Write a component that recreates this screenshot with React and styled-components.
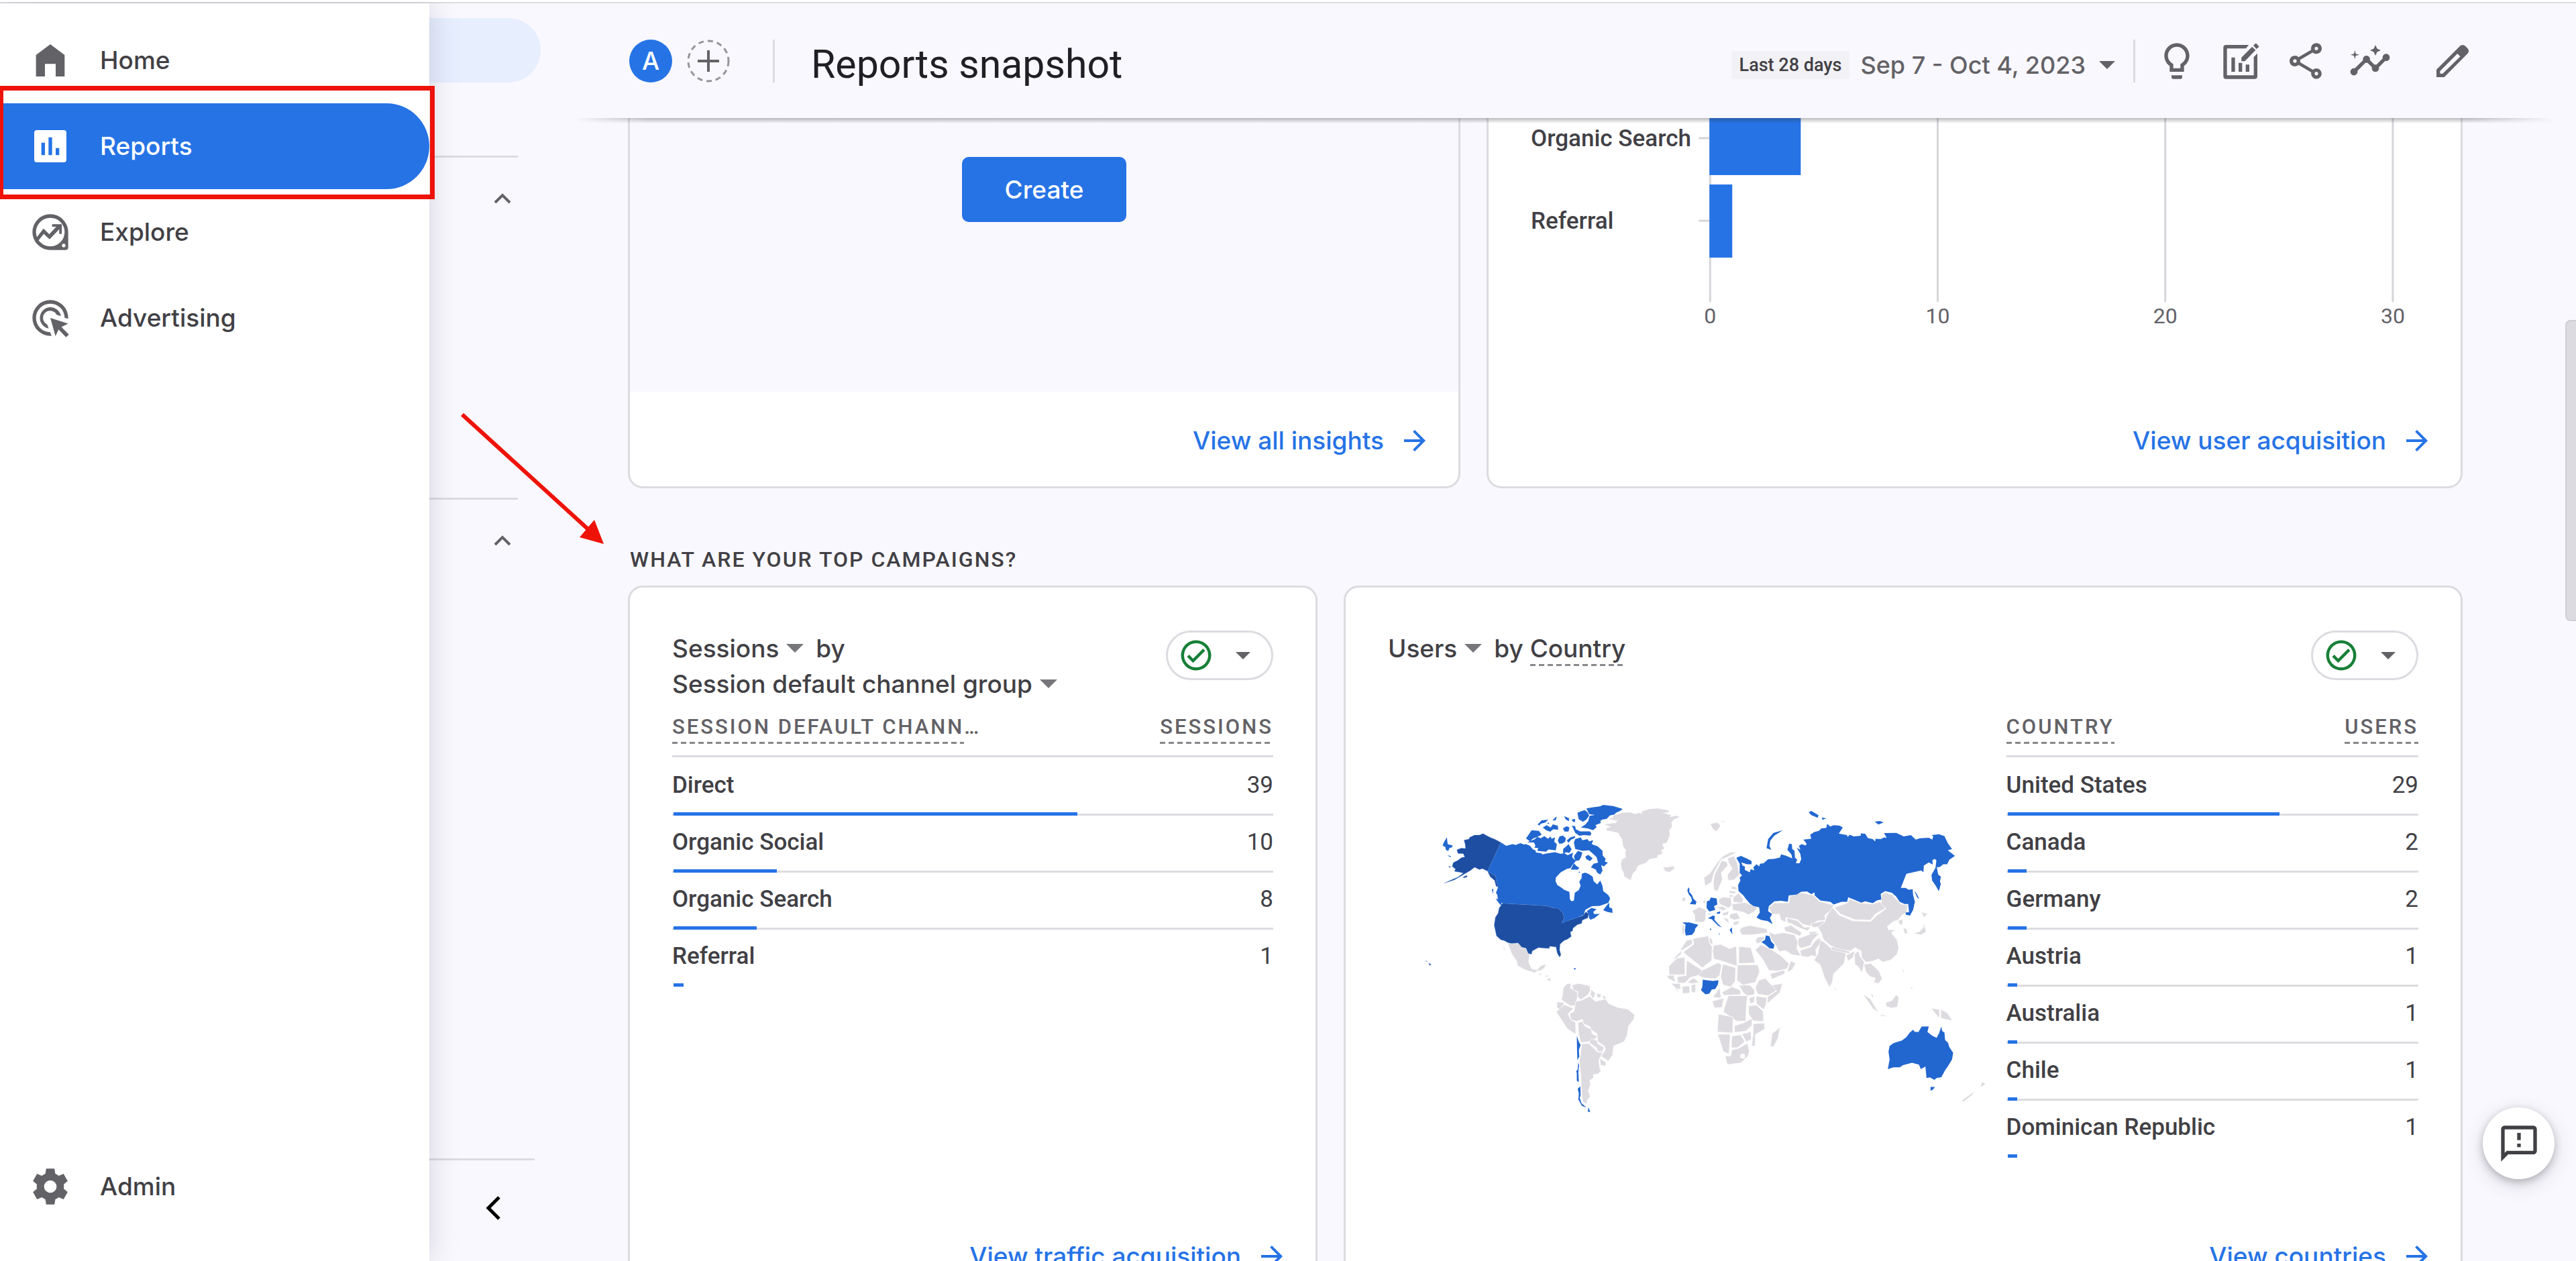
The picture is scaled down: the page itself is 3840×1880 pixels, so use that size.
import React from 'react';
import styled, { createGlobalStyle, css } from 'styled-components';

const c = {
  page: '#f9f8fe',
  white: '#ffffff',
  line: '#dcdbe0',
  ink: '#202024',
  text: '#414045',
  soft: '#636267',
  blue: '#2673e6',
  red: '#ee1308',
};
const display = "'Inter', 'Roboto', sans-serif";
const body = "'Roboto', 'Liberation Sans', sans-serif";

const GlobalStyle = createGlobalStyle`
  * { box-sizing: border-box; }
  body { margin: 0; background: ${c.page}; color: ${c.text}; font-family: ${body}; }
  button { border: 0; margin: 0; padding: 0; background: none; color: inherit; font: inherit; cursor: pointer; }
  a { color: inherit; text-decoration: none; }
  h1, h2, h3 { margin: 0; font-weight: 500; }
  svg { display: block; flex: none; }
`;

const Page = styled.div`
  position: relative;
  display: flex;
  height: 100vh;
  overflow: hidden;
  border-top: 3px solid ${c.white};
`;

/* ---------- icons ---------- */

const Glyph = ({ size = 64, children, ...rest }) => (
  <svg width={size} height={size} viewBox="0 0 24 24" fill="currentColor" aria-hidden="true" {...rest}>
    {children}
  </svg>
);
const HomeIcon = () => <Glyph><path d="M12 3 4 9v12h5v-7h6v7h5V9z" /></Glyph>;
const ReportsIcon = () => (
  <Glyph><path fillRule="evenodd" d="M4.500 3h15A1.500 1.500 0 0 1 21 4.500v15a1.500 1.500 0 0 1-1.500 1.500h-15A1.500 1.500 0 0 1 3 19.500v-15A1.500 1.500 0 0 1 4.500 3zM7 10v7h2v-7zm4-3v10h2V7zm4 6v4h2v-4z" /></Glyph>
);
const ExploreIcon = () => (
  <Glyph>
    <path fillRule="evenodd" d="M12 2a10 10 0 0 1 10 10v8.500a1.500 1.500 0 0 1-1.500 1.500H12A10 10 0 0 1 12 2zm0 2a8 8 0 1 0 0 16 8 8 0 0 0 0-16zm7.500 14.500a1 1 0 1 0 0 2 1 1 0 0 0 0-2z" />
    <path d="M4 15.500 8.200 10l3.200 3.200L15.300 9H13V7.600h5.400V13H17v-2.600L11.600 16 8.300 13l-3.100 4z" />
  </Glyph>
);
const AdvertisingIcon = () => (
  <Glyph>
    <path d="M12 2a10 10 0 0 1 10 10.500l-2-.6A8 8 0 1 0 11.900 20l.8 2H12A10 10 0 0 1 12 2z" />
    <path d="M12 6a6 6 0 0 1 5.900 5l-2.400-.8A4 4 0 1 0 10.200 15.600l.9 2.300A6 6 0 0 1 12 6z" />
    <path d="m12 12 10 3.200-3.800 1.900 4.200 4.200-1.600 1.500-4.200-4.300-1.700 3.700z" />
  </Glyph>
);
const GearIcon = () => (
  <Glyph><path fillRule="evenodd" d="m9.700 2-.5 2.900a7.500 7.500 0 0 0-1.900 1.100L4.600 4.900 2.300 8.900l2.200 1.900a7.500 7.500 0 0 0 0 2.400l-2.200 1.900 2.300 4 2.700-1.100a7.500 7.500 0 0 0 1.900 1.100l.5 2.900h4.600l.5-2.900a7.500 7.500 0 0 0 1.900-1.100l2.700 1.100 2.300-4-2.200-1.900a7.500 7.500 0 0 0 0-2.400l2.200-1.900-2.300-4L16.700 6a7.500 7.500 0 0 0-1.900-1.100L14.300 2zM12 8.500a3.500 3.500 0 1 1 0 7 3.500 3.500 0 0 1 0-7z" /></Glyph>
);
const BulbIcon = () => (
  <Glyph><path d="M9 20h6v1c0 .55-.45 1-1 1h-4c-.55 0-1-.45-1-1v-1zm3-18C8.140 2 5 5.140 5 9c0 2.380 1.190 4.470 3 5.740V18h8v-3.260c1.810-1.270 3-3.360 3-5.740 0-3.860-3.140-7-7-7zm2.850 11.100-.85.6V16h-4v-2.300l-.85-.6C7.800 12.160 7 10.630 7 9c0-2.760 2.240-5 5-5s5 2.240 5 5c0 1.630-.8 3.160-2.150 4.100z" /></Glyph>
);
const ChartEditIcon = () => (
  <Glyph>
    <path d="M16.200 3 14.600 5H4v15h15V9.750l2-2V20.500a1.500 1.500 0 0 1-1.500 1.500h-16A1.500 1.500 0 0 1 2 20.500v-16A1.500 1.500 0 0 1 3.500 3z" />
    <path d="M6.500 10h2v8h-2zM10.500 13h2v5h-2zM14.500 14h2v4h-2z" />
    <path d="M12.100 12.100v-2.100l6-6 1.900 1.900-6 6.200zM18.750 3.400 20.200 2 22 3.900l-1.450 1.350z" />
  </Glyph>
);
const ShareIcon = () => (
  <Glyph><path d="M18 16.080c-.76 0-1.440.3-1.960.77L8.910 12.700c.05-.23.09-.46.09-.7s-.04-.47-.09-.7l7.050-4.110c.54.5 1.250.81 2.040.81 1.660 0 3-1.340 3-3s-1.340-3-3-3-3 1.340-3 3c0 .24.04.47.09.7L8.040 9.810C7.500 9.310 6.790 9 6 9c-1.660 0-3 1.340-3 3s1.340 3 3 3c.79 0 1.500-.31 2.040-.81l7.120 4.160c-.05.21-.08.43-.08.65 0 1.610 1.310 2.920 2.920 2.920s2.920-1.310 2.920-2.920-1.310-2.920-2.920-2.920zM18 4c.55 0 1 .45 1 1s-.45 1-1 1-1-.45-1-1 .45-1 1-1zM6 13c-.55 0-1-.45-1-1s.45-1 1-1 1 .45 1 1-.45 1-1 1zm12 7.020c-.55 0-1-.45-1-1s.45-1 1-1 1 .45 1 1-.45 1-1 1z" /></Glyph>
);
const InsightsIcon = () => (
  <Glyph><path d="M21 8c-1.450 0-2.260 1.440-1.930 2.510l-3.550 3.560c-.3-.09-.74-.09-1.040 0l-2.550-2.550C12.270 10.450 11.460 9 10 9c-1.450 0-2.270 1.440-1.930 2.520l-4.560 4.550C2.440 15.740 1 16.550 1 18c0 1.100.9 2 2 2 1.450 0 2.260-1.440 1.930-2.510l4.550-4.560c.3.09.74.09 1.040 0l2.550 2.550C12.730 16.550 13.540 18 15 18c1.450 0 2.270-1.440 1.930-2.520l3.560-3.550C21.560 12.260 23 11.450 23 10c0-1.100-.9-2-2-2zM15 9l.94-2.070L18 6l-2.060-.93L15 3l-.92 2.070L12 6l2.080.93zM3.500 11 4 9l2-.5L4 8l-.5-2L3 8l-2 .5L3 9z" /></Glyph>
);
const PencilIcon = () => (
  <Glyph><path fillRule="evenodd" d="M3 21v-4.250L16.200 3.600a2 2 0 0 1 2.850 0l1.400 1.400a2 2 0 0 1 0 2.800L7.350 21zM5 19h1.500l9.800-9.500-1.600-1.600L5 17.600z" /></Glyph>
);
const FeedbackIcon = () => (
  <Glyph><path d="M20 2H4c-1.100 0-1.990.9-1.990 2L2 22l4-4h14c1.100 0 2-.9 2-2V4c0-1.100-.9-2-2-2zm0 14H5.170L4 17.170V4h16v12zM11 12h2v2h-2zm0-6h2v4h-2z" /></Glyph>
);
const ArrowIcon = () => (
  <Glyph size={48}><path d="m12 4-1.410 1.410L16.170 11H4v2h12.170l-5.580 5.590L12 20l8-8z" /></Glyph>
);
const CheckIcon = () => (
  <Glyph size={54} color="#188038"><path d="M12 2a10 10 0 1 0 0 20 10 10 0 0 0 0-20zm0 18a8 8 0 1 1 0-16 8 8 0 0 1 0 16zm4.590-12.420L10 14.170l-2.590-2.580L6 13l4 4 8-8z" /></Glyph>
);
const Caret = ({ width = 26 }) => (
  <svg width={width} height={width / 2} viewBox="0 0 2 1" fill="currentColor" aria-hidden="true"><path d="M0 0h2L1 1z" /></svg>
);
const ChevronUp = () => (
  <svg width="26" height="16" viewBox="0 0 26 16" fill="none" stroke="currentColor" strokeWidth="4" aria-hidden="true"><path d="M2 14 13 3l11 11" /></svg>
);

/* ---------- report navigation (under the drawer) ---------- */

const ReportNav = styled.aside`
  display: flex;
  flex-direction: column;
  flex: none;
  width: 806px;
  border-top: 2px solid ${c.line};
`;
const SelectedReport = styled.a`
  height: 96px;
  margin-top: 22px;
  border-radius: 0 48px 48px 0;
  background: #e7eefe;
`;
const NavGroup = styled.section`
  display: flex;
  justify-content: flex-end;
  align-items: flex-start;
  width: 772px;
  height: ${p => p.$height}px;
  margin-top: ${p => p.$first ? 109 : 0}px;
  border-top: 3px solid ${c.line};
  padding: 53px 10px 0 0;
  color: ${c.soft};
`;
const NavFooter = styled.div`
  display: flex;
  justify-content: flex-end;
  width: 797px;
  margin-top: auto;
  border-top: 3px solid ${c.line};
  padding: 53px 50px 61px 0;
  color: #000;
`;

/* ---------- main drawer ---------- */

const Drawer = styled.nav`
  position: absolute;
  z-index: 3;
  top: 2px;
  bottom: 0;
  left: 0;
  display: flex;
  flex-direction: column;
  width: 640px;
  padding: 21px 0 47px;
  background: ${c.white};
  box-shadow: 0 0 42px rgba(60, 58, 80, 0.2);
`;
const DrawerLink = styled.a`
  display: flex;
  align-items: center;
  gap: 42px;
  height: 128px;
  padding-left: 43px;
  border-radius: 0 64px 64px 0;
  font: 500 37px/48px ${display};
  color: ${c.text};
  svg { color: ${c.soft}; }
  ${p => p.$active && css`
    background: ${c.blue};
    color: ${c.white};
    svg { color: ${c.white}; }
  `}
  ${p => p.$last && css`margin-top: auto;`}
`;
const Highlight = styled.div`
  position: absolute;
  z-index: 4;
  top: 125px;
  left: -2px;
  width: 650px;
  height: 169px;
  border: 7px solid ${c.red};
`;
const Pointer = styled.svg`
  position: absolute;
  z-index: 4;
  top: 607px;
  left: 680px;
`;

/* ---------- header ---------- */

const Main = styled.main`
  display: flex;
  flex-direction: column;
  flex: 1;
  min-width: 0;
  border-top: 2px solid ${c.line};
`;
const Header = styled.header`
  position: relative;
  z-index: 1;
  display: flex;
  align-items: center;
  flex: none;
  height: 171px;
  padding: 0 152px 0 132px;
  &::after {
    content: '';
    position: absolute;
    top: 100%;
    left: 50px;
    right: 30px;
    height: 8px;
    background: linear-gradient(rgba(60, 58, 66, 0.34), rgba(60, 58, 66, 0));
    mask-image: linear-gradient(90deg, transparent, #000 110px, #000 calc(100% - 130px), transparent);
  }
`;
const Avatar = styled.button`
  width: 64px;
  height: 64px;
  border-radius: 50%;
  background: ${c.blue};
  color: ${c.white};
  font: 500 37px/64px ${display};
`;
const AddButton = styled.button`
  margin-left: 22px;
  color: ${c.soft};
`;
const Divider = styled.span`
  flex: none;
  width: 3px;
  height: 64px;
  margin: ${p => p.$margin};
  background: ${c.line};
`;
const Title = styled.h1`
  flex: 1;
  padding-top: 10px;
  font: 400 59px/70px ${body};
  color: ${c.ink};
`;
const DateButton = styled.button`
  display: flex;
  align-items: center;
  margin-top: 12px;
  color: ${c.soft};
  font: 500 36px/44px ${display};
  svg { margin-left: 20px; }
`;
const Chip = styled.span`
  margin-right: 16px;
  padding: 0 12px;
  border-radius: 4px;
  background: #f2f1f5;
  color: ${c.text};
  font: 500 27px/42px ${body};
`;
const Tools = styled.div`
  display: flex;
  gap: 32px;
  color: ${c.soft};
  button:last-child { margin-left: 27px; }
`;

/* ---------- cards ---------- */

const Content = styled.div`
  flex: 1;
  min-height: 0;
  overflow: hidden;
  padding: 0 169px 0 130px;
`;
const CardRow = styled.div`
  display: grid;
  grid-template-columns: ${p => p.$columns};
  gap: 39px;
`;
const Card = styled.section`
  display: flex;
  flex-direction: column;
  min-width: 0;
  height: ${p => p.$height}px;
  overflow: hidden;
  border: 3px solid ${c.line};
  border-radius: 22px;
  background: ${c.white};
  ${p => p.$scrolled && css`
    border-top: 0;
    border-radius: 0 0 22px 22px;
  `}
`;
const CardFooter = styled.footer`
  display: flex;
  justify-content: flex-end;
  margin-top: auto;
  padding: 0 41px 44px;
`;
const CardLink = styled.a`
  display: flex;
  align-items: center;
  gap: 22px;
  color: ${c.blue};
  font: 500 37px/48px ${display};
`;
const EmptyInsights = styled.div`
  display: flex;
  justify-content: center;
  align-items: flex-start;
  height: 408px;
  padding-top: 58px;
  background: ${c.page};
`;
const CreateButton = styled.button`
  height: 97px;
  padding: 0 64px;
  border-radius: 10px;
  background: ${c.blue};
  color: ${c.white};
  font: 500 37px/48px ${display};
`;
const SectionTitle = styled.h2`
  margin: 86px 0 19px;
  padding-left: 3px;
  font: 500 32px/40px ${body};
  letter-spacing: 2px;
  text-transform: uppercase;
  color: ${c.text};
`;
const CardBody = styled.div`
  padding: 64px 63px 0;
`;
const CardHead = styled.div`
  display: flex;
  justify-content: space-between;
  align-items: flex-start;
  min-height: 106px;
`;
const CardTitle = styled.h3`
  font: 500 37px/53px ${display};
`;
const Picker = styled.button`
  display: inline-flex;
  align-items: center;
  gap: 11px;
  svg { color: #77767b; }
`;
const Word = styled.span`
  margin-left: 18px;
`;
const dashes = css`
  background: repeating-linear-gradient(90deg, #87868b 0 8px, transparent 8px 13px) left bottom / 100% 3px no-repeat;
`;
const Term = styled.span`
  display: inline-block;
  ${dashes}
`;
const StatusButton = styled.button`
  display: flex;
  align-items: center;
  justify-content: space-between;
  width: 160px;
  height: 74px;
  padding: 0 31px 0 15px;
  border: 3px solid ${c.line};
  border-radius: 37px;
  color: ${c.soft};
`;
const Table = styled.table`
  width: 100%;
  border-collapse: separate;
  border-spacing: 0;
`;
const HeadCell = styled.th`
  padding: 16px 0 17px;
  border-bottom: 3px solid ${c.line};
  text-align: ${p => p.$end ? 'right' : 'left'};
  white-space: nowrap;
  font: 500 31px/44px ${body};
  letter-spacing: 3px;
  text-transform: uppercase;
  color: ${c.soft};
`;
const HeadTerm = styled(Term)`
  vertical-align: top;
  padding-bottom: 3px;
`;
const Row = styled.tr`
  position: relative;
  &:first-child > * { padding-top: 2px; }
  > * { border-bottom: 3px solid ${c.line}; }
  &:last-child > * { border-color: transparent; }
`;
const cell = css`
  padding: 0 0 2px;
  line-height: 80px;
  font-size: 35px;
`;
const Name = styled.th`
  ${cell}
  text-align: left;
  font-weight: 500;
`;
const Value = styled.td`
  ${cell}
  text-align: right;
  font-weight: 400;
`;
const Bar = styled.span`
  position: absolute;
  left: 2px;
  bottom: 0;
  height: 5px;
  background: ${c.blue};
`;
const CountryColumns = styled.div`
  display: flex;
  align-items: flex-start;
`;
const MapPane = styled.div`
  flex: 3;
  min-width: 0;
  padding-top: 125px;
  svg { width: 100%; height: auto; }
`;
const TablePane = styled.div`
  flex: 2;
`;
const FeedbackButton = styled.button`
  position: absolute;
  z-index: 2;
  right: 32px;
  bottom: 122px;
  display: flex;
  align-items: center;
  justify-content: center;
  width: 107px;
  height: 107px;
  border-radius: 50%;
  background: ${c.white};
  color: ${c.text};
  box-shadow: 0 4px 12px rgba(60, 58, 66, 0.3), 0 8px 30px rgba(60, 58, 66, 0.16);
`;
const ScrollThumb = styled.span`
  position: absolute;
  top: 474px;
  right: 0;
  width: 16px;
  height: 449px;
  border: 2px solid #cfced3;
  border-right: 0;
  border-radius: 8px 0 0 8px;
  background: #dcdbe0;
`;

/* ---------- acquisition chart ---------- */

const ChartText = styled.text`
  font: ${p => p.$axis ? 400 : 500} ${p => p.$axis ? 32 : 35}px ${body};
  fill: ${p => p.$axis ? c.soft : c.text};
`;
const ChartSvg = styled.svg`
  width: 100%;
  height: auto;
`;
const acquisition = [
  { label: 'Organic Search', value: 4, middle: 30 },
  { label: 'Referral', value: 1, middle: 153 },
];
const AcquisitionChart = () => (
  <ChartSvg viewBox="0 0 1448 330" role="img" aria-label="Users by channel">
    {[0, 10, 20, 30].map(n => (
      <g key={n}>
        <path d={`M${330 + n * 33.9} 0V274`} stroke="#d6d5da" strokeWidth="3" />
        <ChartText $axis x={330 + n * 33.9} y="306" textAnchor="middle">{n}</ChartText>
      </g>
    ))}
    {acquisition.map(d => (
      <g key={d.label}>
        <ChartText x="63" y={d.middle + 12}>{d.label}</ChartText>
        <path d={`M313 ${d.middle}h17`} stroke="#d6d5da" strokeWidth="3" />
        <rect x="329" y={d.middle - 54} width={d.value * 34} height="109" fill={c.blue} />
      </g>
    ))}
  </ChartSvg>
);

/* ---------- world map ---------- */

const usa = 'M193 245 200 243 215 240 218 232 240 222 262 222 278 215 290 222 310 232 332 241 358 255 298 383 275 372 262 376 245 368 240 366 222 380 208 388 185 402 150 422 105 437 130 425 165 410 190 392 175 388 150 384 155 374 140 362 145 345 165 335 182 322 196 320 190 305 166 304 161 288 180 280 200 282 198 262zM188 410 205 402 207 409 192 413zM298 383 318 396 334 404 338 430 345 455 336 450 330 425 310 408zM365 527 560 538 592 548 612 549 632 566 641 590 630 615 652 606 670 600 700 590 724 582 738 565 750 575 746 592 722 602 718 617 700 622 680 638 678 650 668 655 672 675 655 687 640 693 622 710 620 735 626 757 620 767 610 750 604 722 575 719 575 728 560 728 525 725 498 740 494 755 480 750 470 727 458 725 450 722 435 704 405 706 390 703 372 693 358 690 338 672 328 625 333 590 345 572 350 548zM35 795 46 798 40 805zM22 783 30 788 27 788zM124 362 133 362 130 368z';
const canada = 'M358 255 370 262 381 270 410 262 424 266 445 258 460 264 470 262 488 270 500 285 512 290 515 300 535 302 545 308 560 304 600 298 625 306 640 302 656 312 672 304 680 300 676 320 692 338 680 352 668 370 655 372 625 388 603 412 602 428 610 445 630 458 640 466 664 476 666 508 672 517 684 515 688 480 706 468 714 448 708 430 718 415 720 394 735 390 750 396 768 408 772 428 788 442 802 425 812 450 815 472 838 490 846 505 838 525 800 538 765 540 745 550 735 556 728 578 700 590 670 600 630 615 641 590 632 566 612 549 592 548 560 538 365 527 345 515 342 490 336 480 345 455 338 430 334 404 318 396 298 383zM742 562 762 547 785 553 770 566 775 575 800 574 782 588 778 592 758 600 752 592 750 576zM815 558 828 540 842 524 842 545 855 550 857 570 835 566zM470 237 485 215 495 200 528 203 540 220 520 230 500 238 488 250zM475 255 510 240 520 230 536 236 552 226 568 238 580 228 584 238 600 232 596 252 608 262 603 290 570 286 560 296 520 292 525 280 508 278 512 268 505 255zM522 174 540 156 570 153 556 166 535 172 530 180zM545 188 562 178 580 188 590 174 612 180 614 198 592 196 578 207 560 200zM588 157 602 142 608 140 602 156zM566 165 575 170 568 173zM640 137 662 146 662 160 648 152zM635 192 652 182 664 188 660 206 642 206zM674 152 690 150 688 165 680 162zM675 180 690 182 692 196 712 205 755 205 762 214 758 224 730 222 708 225 690 212zM700 122 712 117 732 110 745 120 752 135 740 152 724 163 705 150zM740 103 765 98 800 94 815 87 860 92 902 105 892 113 872 122 866 130 845 134 830 150 812 152 802 158 804 168 780 178 786 186 770 200 745 192 715 188 735 175 748 160 754 136 778 132 752 128zM612 246 620 228 635 224 648 236 645 252 630 260 618 260zM652 246 668 232 688 226 690 234 672 242 660 256zM636 284 650 272 660 262 674 285 664 302 650 298 636 306zM684 255 690 240 715 232 722 245 745 240 752 250 770 244 764 262 790 272 812 292 812 312 826 328 822 340 836 345 818 362 806 356 812 380 802 398 788 390 782 376 760 366 772 350 792 345 785 320 770 306 752 290 722 292 690 284zM684 316 702 292 722 300 716 320 708 334 690 338zM735 318 748 310 768 325 756 338 740 330zM670 376 684 348 695 360 708 368 702 376zM708 384 712 389 704 391zM334 505 352 512 368 543 350 528zM317 465 324 462 322 485z';
const greenland = 'M820 175 845 170 870 168 880 158 838 150 858 144 860 135 900 122 935 120 958 128 975 122 992 128 985 118 1020 106 1060 103 1105 112 1108 120 1078 122 1118 132 1112 142 1140 136 1158 140 1130 152 1120 165 1122 185 1110 200 1112 222 1104 245 1098 256 1078 262 1088 282 1074 288 1080 305 1058 312 1058 322 1020 330 1008 345 970 358 962 378 946 395 938 423 922 414 910 408 905 385 898 375 894 350 900 330 916 322 914 302 918 290 904 272 900 240 888 225 884 212 830 200 832 190 850 186z';
const russia = 'M270 324 290 315 316 326 338 338 338 352 318 352 292 344 298 358 308 362 308 378 330 388 334 374 350 380 346 366 360 352 372 362 376 350 392 348 412 330 438 328 465 322 470 308 492 314 520 326 516 308 498 288 506 260 518 262 520 284 530 292 532 322 542 332 536 348 552 348 560 330 556 306 540 278 556 288 550 270 562 262 580 268 584 260 570 242 605 238 600 220 618 208 640 202 650 192 672 190 676 172 690 184 705 178 732 180 746 188 728 215 764 222 768 230 776 220 795 228 826 225 826 214 846 216 858 235 880 240 890 250 892 238 915 240 930 232 942 234 930 213 985 212 1018 228 1050 222 1072 242 1090 236 1130 234 1146 242 1150 226 1142 222 1176 218 1200 226 1215 258 1234 284 1215 290 1247 315 1222 332 1212 352 1195 352 1180 364 1166 366 1172 398 1184 408 1180 430 1184 440 1175 473 1162 450 1145 425 1142 400 1160 368 1164 334 1156 328 1146 334 1148 354 1130 344 1108 358 1106 388 1096 380 1060 388 1030 395 1005 458 1026 458 1040 466 1058 464 1060 490 1068 520 1060 556 1046 582 1028 578 1026 568 1042 566 1038 530 1022 530 1000 520 984 496 965 480 935 472 915 485 918 510 898 514 880 526 846 518 828 524 800 512 770 500 765 520 740 520 705 532 690 520 645 514 620 492 620 478 605 486 586 474 560 475 540 488 504 492 500 520 470 516 440 518 415 540 412 562 430 575 420 592 432 620 410 606 378 600 360 590 375 568 372 545 345 538 330 528 315 510 300 490 280 472 278 445 288 425 285 412 296 402 285 392 285 350zM405 280 412 240 436 212 478 200 440 224 422 246 418 270 426 288zM593 120 605 114 637 133 634 145 605 133zM652 143 672 148 655 154zM888 162 912 159 928 166 905 175zM1065 470 1076 484 1088 508 1078 500zM-1043 268-1035 250-1024 232-1020 262-998 268-1000 276-1012 280-1018 293-1028 288-1030 276zM-1022 312-1005 316-1008 321z';
const activeWest = 'M1191 470 1196 455 1200 462 1200 476 1212 490 1218 506 1232 520 1228 532 1202 530 1212 515 1208 500 1198 488zM1168 612 1200 612 1240 623 1226 640 1224 652 1212 668 1184 671 1180 650 1183 622zM1278 518 1290 514 1296 501 1322 505 1325 532 1310 540 1316 556 1290 564 1277 548zM1322 568 1338 563 1337 573 1324 574zM1283 594 1305 582 1314 584 1312 600 1328 618 1345 635 1330 628 1308 606 1300 598zM1380 645 1390 634 1392 666 1386 656zM1292 640h5v6h-5zM1332 662h5v3h-5zM684 817h8v5h-8zM697 1120 706 1145 714 1160 706 1182 708 1212 700 1228 698 1180zM703 1238 707 1250 704 1280 706 1326 697 1320 697 1285 694 1278 701 1270zM701 1356 713 1345 714 1385 710 1396 718 1420 740 1440 720 1432 704 1404 706 1376zM746 1458 749 1438 757 1460z';
const activeEast = 'M120 868 135 870 165 874 190 871 188 888 176 910 160 912 150 930 132 934 112 915 118 900zM382 700 398 690 402 670 418 674 426 698 440 712 436 730 418 728 400 712zM947 1268 955 1225 950 1190 955 1165 972 1152 1010 1140 1030 1125 1045 1105 1060 1092 1068 1102 1084 1102 1098 1078 1130 1077 1124 1102 1145 1118 1165 1128 1176 1108 1186 1078 1190 1098 1200 1104 1203 1138 1216 1150 1222 1170 1239 1195 1234 1225 1215 1256 1205 1270 1186 1304 1165 1308 1155 1316 1135 1305 1120 1308 1115 1256 1095 1268 1086 1248 1055 1240 1015 1250 1000 1260 972 1260zM1138 1348 1157 1348 1150 1358 1138 1365z';
const inactiveWest = [
  'M388 706 435 704 455 726 468 728 486 753 482 790 495 820 520 824 536 806 560 798 552 816 535 828 520 828 510 838 470 826 432 806 428 785 405 750zM366 700 372 722 382 746 370 730zM522 848 540 836 536 848zM550 852 574 846 566 856zM562 868 576 858 582 878z',
  'M1083 362 1095 366 1130 360 1134 372 1110 388 1090 382zM1293 172 1325 165 1340 180 1320 206 1305 195zM1338 158 1370 161 1350 165z',
  'M636 905 655 886 672 885 668 905 700 925 698 955 690 985 668 985 628 958 634 935z',
  'M675 892 705 885 755 895 757 918 748 935 715 958 700 945 702 922 682 915z',
  'M762 912 780 930 770 955 758 935zM785 930 805 932 803 948 788 948zM812 935 832 950 815 955z',
  'M608 968 642 970 624 1005 608 992z',
  'M605 1012 642 980 682 997 658 1020 668 1045 692 1060 692 1112 655 1088 640 1065z',
  'M692 965 715 962 755 942 780 965 825 955 840 975 880 992 925 1000 955 1025 952 1045 928 1075 922 1115 908 1145 862 1165 857 1205 838 1232 805 1210 825 1180 820 1165 790 1145 788 1110 765 1095 755 1078 728 1065 722 1045 695 1055 670 1045 665 1020 685 1010z',
  'M702 1060 722 1055 732 1075 762 1090 765 1110 788 1120 782 1130 752 1145 715 1150 705 1110z',
  'M752 1150 762 1132 785 1138 792 1155 818 1170 812 1190 790 1188 785 1172z',
  'M718 1155 750 1152 790 1192 812 1192 795 1230 800 1265 805 1278 790 1290 770 1292 772 1308 755 1318 758 1338 748 1365 757 1390 742 1410 744 1425 724 1415 718 1370 715 1300 708 1230 716 1190z',
  'M800 1220 828 1238 825 1254 803 1250z',
  'M1167 505 1182 498 1182 515 1168 520zM1168 626h9v38h-9z',
  'M1212 562 1245 543 1275 558 1272 600 1262 612 1225 610 1224 580z',
  'M1265 412 1290 395 1325 345 1350 316 1385 298 1412 298 1400 305 1370 320 1342 332 1308 395 1300 432 1270 450z',
  'M1312 400 1345 335 1368 342 1372 358 1342 390 1348 420 1325 474 1310 466 1307 440z',
  'M1375 345 1372 325 1400 315 1415 350 1424 400 1400 422 1374 425 1370 400 1392 372z',
  'M1332 508 1350 499 1386 502 1389 535 1375 548 1335 530z',
  'M1396 500 1420 481 1442 508 1435 526 1395 520zM1388 450 1412 455 1410 466 1388 462zM1378 470 1412 475 1402 484 1380 482zM1378 488 1398 490 1392 500 1380 498z',
  'M1390 530 1450 523 1505 545 1490 565 1465 578 1440 566 1395 558z',
  'M1382 575 1412 568 1428 595 1400 602 1380 592zM1395 610 1426 605 1415 622 1400 625zM1322 545 1345 540 1370 552 1350 560zM1348 570 1376 562 1372 580 1350 582zM1350 590 1372 596 1380 618 1362 605zM1258 520 1272 512 1272 530zM1278 572 1300 568 1290 580z',
  'M1172 745 1220 710 1216 685 1285 672 1290 705 1302 720 1300 782 1258 815z',
  'M1290 675 1302 690 1305 712 1292 705zM1158 738 1188 692 1212 688 1214 708 1170 735z',
  'M1108 798 1162 740 1165 752 1145 770 1122 782z',
  'M1108 808 1145 772 1180 768 1180 846 1110 846z',
  'M1188 782 1256 825 1250 845 1202 860 1180 884 1148 882 1145 855 1186 850z',
  'M1168 898 1200 896 1202 928 1170 930zM1208 892 1228 888 1228 924 1210 926zM1190 882 1218 860 1244 880 1215 886zM1100 850 1130 848 1138 880 1105 862zM1118 885 1158 885 1162 908 1145 912zM1130 905 1160 925 1145 920z',
];
const inactiveEast = [
  'M285 650 290 636 330 626 405 640 410 658 340 668 295 668z',
  'M415 545 440 525 505 525 510 495 560 480 612 490 640 518 706 535 690 560 665 580 668 602 630 606 600 628 565 620 545 600 490 590 492 612 470 602 462 575 430 575z',
  'M495 592 545 605 572 634 602 632 588 650 560 640 520 620 498 612zM482 635 515 625 562 658 555 674 520 660 490 652zM602 618 650 608 668 605 640 632 612 635zM592 655 634 652 620 668 600 668z',
  'M708 545 768 525 775 506 820 525 880 530 912 520 938 548 890 575 870 602 800 600 735 575z',
  'M700 545 730 580 790 605 870 608 900 580 940 550 918 530 918 490 935 478 965 488 1005 530 1036 535 1030 568 1010 580 992 602 972 608 945 630 950 645 982 645 962 658 988 690 996 725 988 755 960 780 925 790 905 775 880 785 850 790 830 770 828 740 800 725 780 740 720 730 690 715 660 690 650 660 635 635 665 610 675 580z',
  'M992 605 1015 598 1010 625 1000 620zM1015 638 1030 640 1036 662 1022 662zM1108 612 1118 655 1095 668 1060 662 1090 652 1106 635zM1098 565 1126 574 1108 590z',
  'M415 655 440 665 480 658 530 668 545 700 540 730 560 762 520 757 490 738 462 742 442 708 425 685z',
  'M545 685 600 665 642 660 612 690 602 715 560 728 547 715z',
  'M555 738 602 722 622 695 640 682 652 695 625 735 628 765 605 760 590 768 560 762z',
  'M645 690 662 700 690 725 760 750 752 795 705 842 697 885 686 902 665 860 645 802 618 782 635 750z',
  'M695 722 778 742 775 752 695 735zM760 760 802 738 790 770 770 785zM708 900 716 910 712 918z',
  'M798 755 815 738 824 765 842 790 832 838 815 810 800 800z',
  'M840 800 870 795 908 830 922 865 905 885 885 880 892 860 870 855 850 835z',
  'M355 695 365 678 395 675 392 690 365 708z',
  'M355 735 380 712 430 735 470 762 506 798 495 820 450 830 415 826 390 780z',
  'M420 842 485 825 486 842 430 866zM500 822 514 784 536 795 520 822 500 836z',
  'M168 715 200 710 240 730 270 718 273 808 205 785 170 776 164 740z',
  'M281 720 335 725 354 793 281 796z',
  'M118 826 190 792 204 802 195 850 175 864 125 860 100 850z',
  'M210 798 267 815 265 875 245 900 210 892 200 852z',
  'M275 802 366 802 374 832 355 880 300 892 272 870z',
  'M165 945 196 905 202 950 175 948zM205 925 250 900 288 915 290 935 215 938zM282 893 330 892 352 915 350 935 320 940 300 925z',
  'M355 905 372 870 400 862 420 885 450 915 412 940 365 932z',
  'M428 893 476 885 465 925 408 975 410 945 450 918zM358 942 406 948 402 980 392 1002 360 975zM328 950 352 942 350 970 330 975z',
  'M325 985 360 982 390 1010 392 1055 345 1052 325 1020z',
  'M235 940 320 940 315 980 312 1053 270 1053 212 1012 222 975z',
  'M163 965 185 958 214 950 206 992 172 994z',
  'M190 1022 255 1035 254 1106 185 1102z',
  'M262 1075 300 1062 340 1042 340 1072 312 1098 262 1104zM345 1065 396 1062 396 1090 355 1112 354 1165 338 1165 345 1112z',
  'M295 1112 335 1100 337 1135 315 1146zM250 1120 290 1115 308 1145 275 1172 248 1172z',
  'M187 1112 243 1112 237 1200 212 1190z',
  'M220 1210 245 1208 250 1182 280 1175 320 1152 328 1188 322 1210 290 1240 230 1248z',
  'M466 1080 456 1130 435 1170 422 1165 430 1110z',
  'M835 932 870 955 905 1015 880 997zM912 1023 955 1033 918 1031zM938 970 965 962 985 935 996 948 990 990 965 995 940 988zM868 930 883 937 880 950zM1140 995 1178 1002 1178 1042zM1184 1000 1215 1018 1235 1052 1184 1040zM1012 820 1020 828 1016 840zM1050 900 1058 905 1052 915z',
  'M1277 1408 1336 1366 1322 1385 1285 1414zM1360 1350 1368 1325 1385 1332 1370 1345z',
];
const Land = styled.path`
  fill: #dddbdf;
  stroke: #ffffff;
  stroke-width: 2;
  stroke-linejoin: round;
`;
const WorldMap = () => (
  <svg viewBox="-147 0 2763 1560" role="img" aria-label="Users by country on a world map">
    {inactiveWest.map(d => <Land key={d} d={d} />)}
    <path d={greenland} fill="#dddbdf" />
    <path d={canada} fill="#2267d0" />
    <path d={usa} fill="#1d4ea2" stroke="#4f86d6" strokeWidth="1" />
    <g transform="translate(1140 0)">
      {inactiveEast.map(d => <Land key={d} d={d} />)}
      <circle cx="298" cy="1210" r="11" fill="#fff" />
      <path d={`${russia}${activeEast}`} fill="#2267d0" />
    </g>
    <path d={activeWest} fill="#2267d0" />
  </svg>
);

/* ---------- data tables ---------- */

const sessions = [['Direct', 39], ['Organic Social', 10], ['Organic Search', 8], ['Referral', 1]];
const countries = [['United States', 29], ['Canada', 2], ['Germany', 2], ['Austria', 1], ['Australia', 1], ['Chile', 1], ['Dominican Republic', 1]];

const MetricTable = ({ name, cut, value, rows, total }) => (
  <Table>
    <thead>
      <tr>
        <HeadCell scope="col"><HeadTerm>{name}</HeadTerm>{cut && '…'}</HeadCell>
        <HeadCell scope="col" $end><HeadTerm>{value}</HeadTerm></HeadCell>
      </tr>
    </thead>
    <tbody>
      {rows.map(([label, count]) => (
        <Row key={label}>
          <Name scope="row">{label}<Bar style={{ width: `${(count / total) * 100}%` }} /></Name>
          <Value>{count}</Value>
        </Row>
      ))}
    </tbody>
  </Table>
);
const Status = () => (
  <StatusButton aria-label="Data quality"><CheckIcon /><Caret width={22} /></StatusButton>
);
const ViewLink = ({ children }) => (
  <CardFooter><CardLink href="#">{children}<ArrowIcon /></CardLink></CardFooter>
);

export default function App() {
  return (
    <>
      <GlobalStyle />
      <Page>
        <ReportNav>
          <SelectedReport href="#" aria-label="Reports snapshot" />
          <NavGroup $first $height={510}><button aria-label="Collapse group"><ChevronUp /></button></NavGroup>
          <NavGroup $height={300}><button aria-label="Collapse group"><ChevronUp /></button></NavGroup>
          <NavFooter>
            <button aria-label="Collapse navigation">
              <svg width="24" height="36" viewBox="0 0 24 36" fill="none" stroke="currentColor" strokeWidth="5" aria-hidden="true"><path d="M21 2 5 18l16 16" /></svg>
            </button>
          </NavFooter>
        </ReportNav>

        <Main>
          <Header>
            <Avatar aria-label="All users">A</Avatar>
            <AddButton aria-label="Add comparison">
              <svg width="64" height="64" viewBox="0 0 64 64" fill="none" stroke="currentColor" aria-hidden="true">
                <circle cx="32" cy="32" r="30" stroke="#96959a" strokeWidth="3" strokeDasharray="8 6" />
                <path d="M32 16v32M16 32h32" strokeWidth="4" />
              </svg>
            </AddButton>
            <Divider $margin="0 54px 0 64px" />
            <Title>Reports snapshot</Title>
            <DateButton><Chip>Last 28 days</Chip>Sep 7 - Oct 4, 2023<Caret width={24} /></DateButton>
            <Divider $margin="0 30px 0 27px" />
            <Tools>
              <button aria-label="Insights"><BulbIcon /></button>
              <button aria-label="Edit comparisons"><ChartEditIcon /></button>
              <button aria-label="Share this report"><ShareIcon /></button>
              <button aria-label="Analytics intelligence"><InsightsIcon /></button>
              <button aria-label="Customize report"><PencilIcon /></button>
            </Tools>
          </Header>

          <Content>
            <CardRow $columns="1241fr 1455fr">
              <Card $scrolled $height={552}>
                <EmptyInsights><CreateButton>Create</CreateButton></EmptyInsights>
                <ViewLink>View all insights</ViewLink>
              </Card>
              <Card $scrolled $height={552}>
                <AcquisitionChart />
                <ViewLink>View user acquisition</ViewLink>
              </Card>
            </CardRow>

            <SectionTitle>What are your top campaigns?</SectionTitle>

            <CardRow $columns="1028fr 1668fr">
              <Card $height={1071}>
                <CardBody>
                  <CardHead>
                    <CardTitle>
                      <Picker>Sessions<Caret /></Picker>
                      <Word>by</Word><br />
                      <Picker>Session default channel group<Caret /></Picker>
                    </CardTitle>
                    <Status />
                  </CardHead>
                  <MetricTable name="Session default chann" cut value="Sessions" rows={sessions} total={58} />
                </CardBody>
                <ViewLink>View traffic acquisition</ViewLink>
              </Card>
              <Card $height={1071}>
                <CardBody>
                  <CardHead>
                    <CardTitle>
                      <Picker>Users<Caret /></Picker>
                      <Word>by <Term>Country</Term></Word>
                    </CardTitle>
                    <Status />
                  </CardHead>
                  <CountryColumns>
                    <MapPane><WorldMap /></MapPane>
                    <TablePane><MetricTable name="Country" value="Users" rows={countries} total={44} /></TablePane>
                  </CountryColumns>
                </CardBody>
                <ViewLink>View countries</ViewLink>
              </Card>
            </CardRow>
          </Content>
        </Main>

        <Drawer aria-label="Main">
          <DrawerLink href="#"><HomeIcon />Home</DrawerLink>
          <DrawerLink href="#" $active aria-current="page"><ReportsIcon />Reports</DrawerLink>
          <DrawerLink href="#"><ExploreIcon />Explore</DrawerLink>
          <DrawerLink href="#"><AdvertisingIcon />Advertising</DrawerLink>
          <DrawerLink href="#" $last><GearIcon />Admin</DrawerLink>
        </Drawer>
        <Highlight />
        <Pointer width="230" height="210" viewBox="0 0 230 210" aria-hidden="true">
          <path d="M9 8 200 182" stroke={c.red} strokeWidth="6" />
          <path d="M220 201 206 165 184 191z" fill={c.red} />
        </Pointer>
        <ScrollThumb />
        <FeedbackButton aria-label="Send feedback"><FeedbackIcon /></FeedbackButton>
      </Page>
    </>
  );
}
